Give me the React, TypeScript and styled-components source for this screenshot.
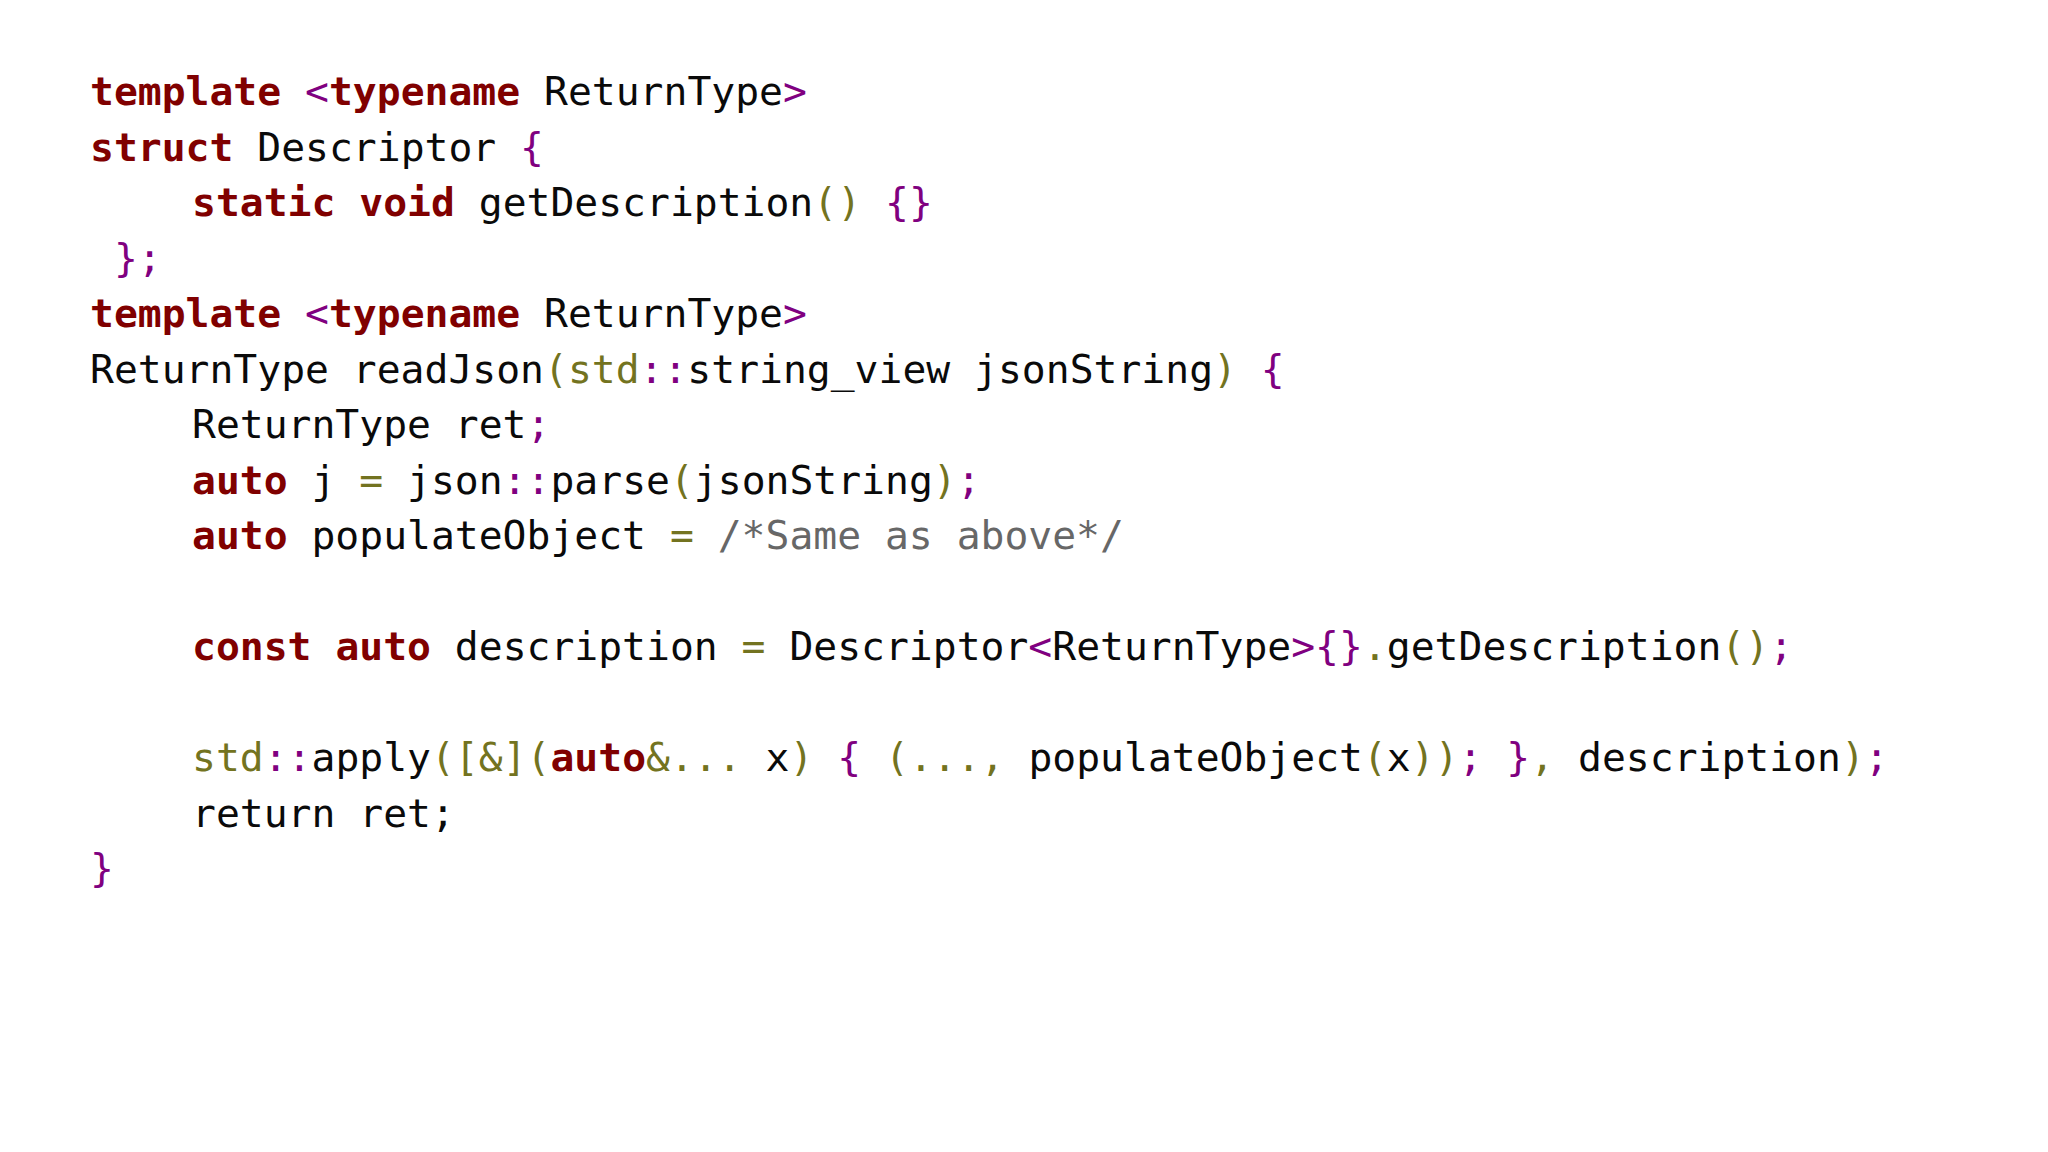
import React from "react";
import styled, { createGlobalStyle } from "styled-components";

const Global = createGlobalStyle`
  html, body { margin: 0; padding: 0; background: #ffffff; }
  body { font-family: "DejaVu Sans Mono", "Liberation Mono", monospace; }
`;

const Slide = styled.main`
  width: 2048px;
  height: 1152px;
  box-sizing: border-box;
  padding: 64px 0 0 90px;
  background: #ffffff;
`;

const Code = styled.div`
  display: flex;
  flex-direction: column;
  font-family: "DejaVu Sans Mono", "Liberation Mono", monospace;
  font-size: 39.7px;
  line-height: 55.5px;
  color: #0a0a0a;
  white-space: pre;
`;

const Line = styled.div<{ $indent?: boolean }>`
  height: 55.5px;
  padding-left: ${(p) => (p.$indent ? "102px" : "0")};
`;

const Kw = styled.span`
  color: #800000;
  font-weight: bold;
`;
const Pu = styled.span`
  color: #800080;
`;
const Ol = styled.span`
  color: #737320;
`;
const Cm = styled.span`
  color: #676767;
`;

export default function App() {
  return (
    <>
      <Global />
      <Slide>
        <Code>
          <Line>
            <Kw>template</Kw> <Pu>&lt;</Pu><Kw>typename</Kw> ReturnType<Pu>&gt;</Pu>
          </Line>
          <Line>
            <Kw>struct</Kw> Descriptor <Pu>{"{"}</Pu>
          </Line>
          <Line $indent>
            <Kw>static</Kw> <Kw>void</Kw> getDescription<Ol>()</Ol> <Pu>{"{}"}</Pu>
          </Line>
          <Line>
            {" "}
            <Pu>{"};"}</Pu>
          </Line>
          <Line>
            <Kw>template</Kw> <Pu>&lt;</Pu><Kw>typename</Kw> ReturnType<Pu>&gt;</Pu>
          </Line>
          <Line>
            ReturnType readJson<Ol>(std</Ol><Pu>::</Pu>string_view jsonString<Ol>)</Ol> <Pu>{"{"}</Pu>
          </Line>
          <Line $indent>
            ReturnType ret<Pu>;</Pu>
          </Line>
          <Line $indent>
            <Kw>auto</Kw> j <Ol>=</Ol> json<Pu>::</Pu>parse<Ol>(</Ol>jsonString<Ol>)</Ol><Pu>;</Pu>
          </Line>
          <Line $indent>
            <Kw>auto</Kw> populateObject <Ol>=</Ol> <Cm>/*Same as above*/</Cm>
          </Line>
          <Line />
          <Line $indent>
            <Kw>const</Kw> <Kw>auto</Kw> description <Ol>=</Ol> Descriptor<Pu>&lt;</Pu>ReturnType<Pu>&gt;{"{}"}</Pu>
            <Ol>.</Ol>getDescription<Ol>()</Ol><Pu>;</Pu>
          </Line>
          <Line />
          <Line $indent>
            <Ol>std</Ol><Pu>::</Pu>apply<Ol>([&amp;](</Ol><Kw>auto</Kw><Ol>&amp;...</Ol> x<Ol>)</Ol> <Pu>{"{"}</Pu>{" "}
            <Ol>(...,</Ol> populateObject<Ol>(</Ol>x<Ol>))</Ol><Pu>;</Pu> <Pu>{"}"}</Pu><Ol>,</Ol> description<Ol>)</Ol>
            <Pu>;</Pu>
          </Line>
          <Line $indent>return ret;</Line>
          <Line>
            <Pu>{"}"}</Pu>
          </Line>
        </Code>
      </Slide>
    </>
  );
}
